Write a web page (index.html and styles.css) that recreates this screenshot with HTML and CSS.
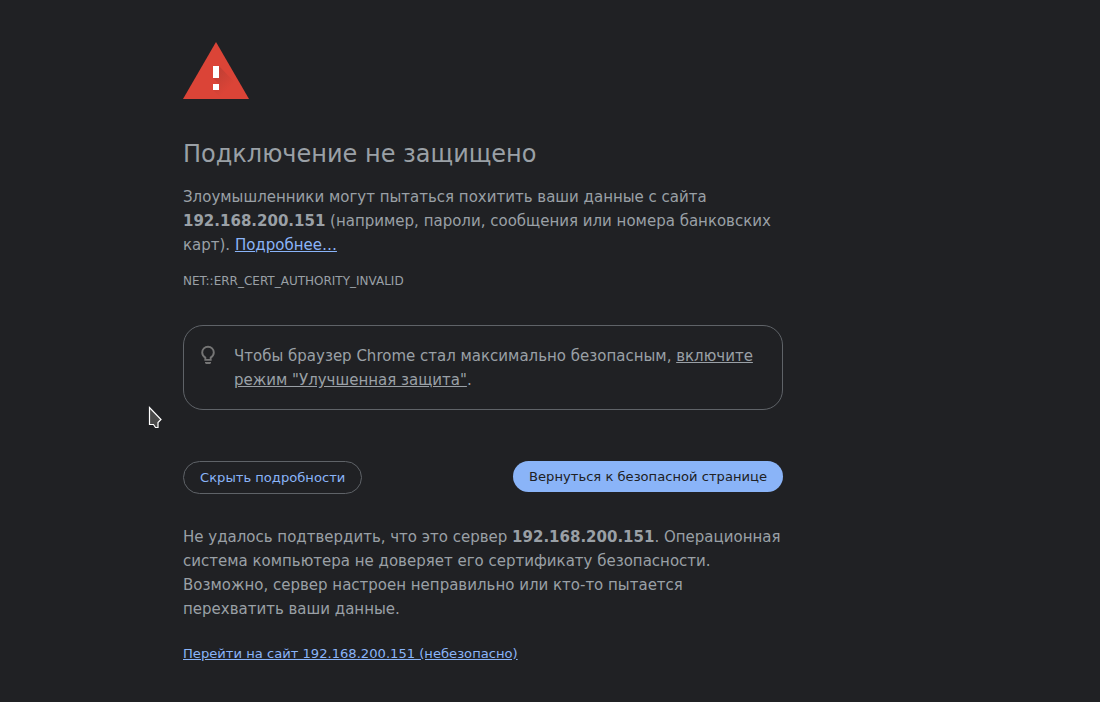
FILE: index.html
```html
<!DOCTYPE html>
<html lang="ru">
<head>
<meta charset="utf-8">
<title>Ошибка нарушения конфиденциальности</title>
<link rel="stylesheet" href="styles.css">
</head>
<body>
<main class="interstitial">
  <svg class="warning-icon" width="72" height="72" viewBox="0 0 72 72">
    <defs><linearGradient id="shade" gradientUnits="userSpaceOnUse" x1="34" y1="34" x2="50" y2="50"><stop offset="0" stop-color="#3e2723" stop-opacity=".18"/><stop offset="1" stop-color="#3e2723" stop-opacity="0"/></linearGradient></defs>
    <path fill="#db4437" d="M3 62h66L36 5z"/>
    <path fill="url(#shade)" d="M39 29l27 28 3 5H42l-9-9 6-6-6-6 6-4z"/>
    <path fill="#fff" d="M33 29h6v12h-6zM33 47h6v6h-6z"/>
  </svg>
  <h1 class="title">Подключение не защищено</h1>
  <p class="message">Злоумышленники могут пытаться похитить ваши данные с сайта <strong>192.168.200.151</strong> (например, пароли, сообщения или номера банковских карт). <a class="link" href="#">Подробнее…</a></p>
  <div class="error-code">NET::ERR_CERT_AUTHORITY_INVALID</div>
  <div class="promo">
    <svg class="bulb" width="24" height="24" viewBox="0 0 24 24"><path fill="none" stroke="#757575" stroke-width="1.900" d="M9.300 15.900v-2.300C7.300 12.300 6.200 10.700 6.200 8.500a5.800 5.800 0 0 1 11.600 0c0 2.200-1.100 3.800-3.100 5.100v2.300z"/><path fill="#757575" d="M9 18h6v1l-1 1h-4l-1-1z"/></svg>
    <p class="promo-text">Чтобы браузер Chrome стал максимально безопасным, <a class="promo-link" href="#">включите режим "Улучшенная защита"</a>.</p>
  </div>
  <div class="actions">
    <button class="button secondary">Скрыть подробности</button>
    <button class="button primary">Вернуться к безопасной странице</button>
  </div>
  <p class="details">Не удалось подтвердить, что это сервер <strong>192.168.200.151</strong>. Операционная система компьютера не доверяет его сертификату безопасности. Возможно, сервер настроен неправильно или кто-то пытается перехватить ваши данные.</p>
  <p class="proceed"><a class="link" href="#">Перейти на сайт 192.168.200.151 (небезопасно)</a></p>
</main>
<svg class="cursor" width="16" height="24" viewBox="0 0 16 24"><path fill="#4a4a4a" stroke="#fff" stroke-width="1.200" d="M1.500 1.500v17h4l2 3h2.500v-5l3-3z"/></svg>
</body>
</html>
```
FILE: styles.css
```css
body {
  margin: 0;
  background: #202124;
  color: #9aa0a6;
  font: 15px/24px "DejaVu Sans", sans-serif;
}
.interstitial {
  box-sizing: border-box;
  width: 600px;
  margin: 0 0 0 183px;
  padding-top: 37px;
}
.warning-icon { display: block; margin-left: -3px; }
.title {
  margin: 30px 0 16px;
  font-size: 24px;
  font-weight: 400;
  line-height: 30px;
}
.message { margin: 0; }
.link { color: #8ab4f8; }
.error-code {
  margin-top: 15px;
  font-size: 12px;
  line-height: 18px;
}
.promo {
  box-sizing: border-box;
  display: flex;
  height: 85px;
  margin-top: 35px;
  padding: 18px 20px 0 12px;
  border: 1px solid #5f6368;
  border-radius: 20px;
}
.bulb { flex: none; margin-right: 14px; }
.promo-text { margin: 0; }
.promo-link { color: inherit; }
.actions {
  display: flex;
  justify-content: space-between;
  align-items: flex-start;
  margin-top: 51px;
}
.button {
  border: 0;
  border-radius: 20px;
  padding: 8px 16px;
  font: 13.125px/15px "DejaVu Sans", sans-serif;
  white-space: nowrap;
}
.primary { background: #8ab4f8; color: #202124; }
.secondary {
  border: 1px solid #5f6368;
  background: transparent;
  color: #8ab4f8;
}
.details { margin: 31px 0 0; }
.proceed { margin: 21px 0 0; font-size: 13.125px; }
.cursor { position: absolute; left: 148px; top: 406px; }
```
